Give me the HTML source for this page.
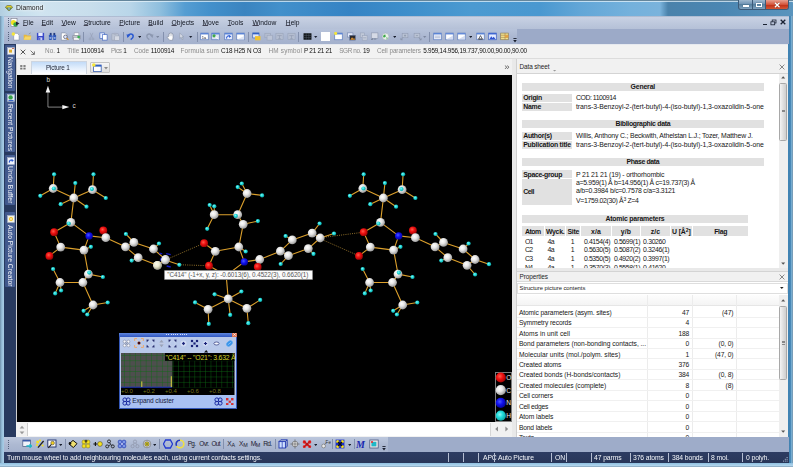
<!DOCTYPE html>
<html><head><meta charset="utf-8"><title>Diamond</title>
<style>
*{box-sizing:border-box;margin:0;padding:0}
html,body{width:793px;height:467px;overflow:hidden;background:#8fb4d4}
body{font-family:"Liberation Sans",sans-serif;font-size:7.2px;color:#111;position:relative;-webkit-font-smoothing:antialiased}
.a{position:absolute}
.t{position:absolute;white-space:nowrap;line-height:1}
.g{color:#8a8a8a}
u{text-decoration-thickness:0.5px;text-underline-offset:0.4px;text-decoration-color:#445}
#frame{left:0;top:0;width:793px;height:467px;background:#a9c6e2;border-radius:4px 4px 0 0}
#title{left:0;top:0;width:793px;height:15.5px;background:linear-gradient(90deg,#b2cee0 0,#c2dcea 12px,#d0e4f0 40px,#c8deec 90px,#b9d6e9 130px,#8fbfde 160px,#559dd2 185px,#4390cb 210px,#3a84c0 245px,#4290cb 280px,#3583c4 350px,#3c8dca 400px,#4b9ad1 470px,#4a98d0 540px,#62a6d7 580px,#74b1dc 630px,#7ab3dc 660px,#4a82ab 668px,#4a86b2 720px,#5a94bd 793px);border-radius:4px 4px 0 0}
#title:after{content:"";position:absolute;left:0;top:0;right:0;height:2px;background:linear-gradient(#64869c 0 50%,rgba(235,246,252,.7) 50% 100%)}
#root{position:absolute;left:0;top:0;width:793px;height:467px;overflow:hidden;filter:blur(.4px)}
</style></head><body><div id="root">
<div id="frame" class="a"></div>
<div id="title" class="a"></div>
<!-- title -->
<svg class="a" style="left:5.2px;top:4.6px" width="8" height="6.6" viewBox="0 0 10 8"><polygon points="0.4,2.6 2.6,0.6 7.4,0.6 9.6,2.6 5,7.6" fill="#e8d428" stroke="#4a4a28" stroke-width="0.7"/><polygon points="1.2,3 8.8,3 5,7.2" fill="#3a7a58" opacity=".85"/><polygon points="3.4,3 6.6,3 5,7.2" fill="#8fb0d0" opacity=".9"/></svg>
<div class="t" style="left:16px;top:4.6px;font-size:6.8px;color:#1a1a1a;text-shadow:0 0 3px #fff,0 0 4px #fff">Diamond</div>
<!-- caption buttons -->
<div class="a" style="left:738px;top:0;width:51px;height:9.5px;border:1px solid #3c5a78;border-top:0;border-radius:0 0 3px 3px;background:linear-gradient(#9fb9cf,#6f93b3 45%,#56809f 50%,#7fa3c0);overflow:hidden">
 <div class="a" style="left:13px;top:0;width:1px;height:10px;background:#3c5a78"></div>
 <div class="a" style="left:26px;top:0;width:1px;height:10px;background:#3c5a78"></div>
 <div class="a" style="left:27px;top:0;width:24px;height:10px;background:linear-gradient(#e8a090,#d4553c 45%,#c03018 50%,#d8603c)"></div>
 <div class="a" style="left:4px;top:5px;width:5.5px;height:2px;background:#fff;box-shadow:0 0 1px #234"></div>
 <div class="a" style="left:17px;top:2.5px;width:6px;height:4.5px;border:1.2px solid #fff;box-shadow:0 0 1px #234"></div>
 <svg class="a" style="left:35.4px;top:1.8px" width="6.4" height="6" viewBox="0 0 6.4 6"><path d="M.9.8 5.5 5.2M5.5.8.9 5.2" stroke="#5a1a10" stroke-width="2.2" opacity=".55"/><path d="M.9.8 5.5 5.2M5.5.8.9 5.2" stroke="#fff" stroke-width="1.4"/></svg>
</div>
<!-- menu bar -->
<div class="a" style="left:4px;top:15.5px;width:785px;height:14px;background:linear-gradient(#94a6c0 0,#c9d2e4 7%,#bec9dd 50%,#b3bfd6 100%)"></div>
<div class="a" style="left:7.6px;top:18px;width:1px;height:9px;background:repeating-linear-gradient(#55627c 0 1px,transparent 1px 2px)"></div>
<svg class="a" style="left:10px;top:17.5px" width="10" height="10" viewBox="0 0 10 10"><rect x="1" y=".5" width="6" height="8" fill="#fff" stroke="#667" stroke-width=".5"/><circle cx="3.5" cy="4.5" r="2.6" fill="#f0e020"/><circle cx="5.5" cy="6.5" r="2.2" fill="#38a848"/><polygon points="6,3.5 9.5,5.5 6,7.5" fill="#223"/></svg>
<div class="t" id="menu" style="left:0;top:19.8px;font-size:6.7px;color:#10151f">
<span class="a" style="left:23px"><u>F</u>ile</span><span class="a" style="left:41.6px"><u>E</u>dit</span><span class="a" style="left:61.5px"><u>V</u>iew</span><span class="a" style="left:83.7px"><u>S</u>tructure</span><span class="a" style="left:119.3px"><u>P</u>icture</span><span class="a" style="left:148.3px"><u>B</u>uild</span><span class="a" style="left:171.5px"><u>O</u>bjects</span><span class="a" style="left:202.5px"><u>M</u>ove</span><span class="a" style="left:227.7px"><u>T</u>ools</span><span class="a" style="left:252.5px"><u>W</u>indow</span><span class="a" style="left:285.8px"><u>H</u>elp</span>
</div>
<!-- mdi buttons -->
<div class="a" style="left:762.5px;top:24.2px;width:4px;height:1.2px;background:#1a2233"></div>
<svg class="a" style="left:770px;top:18.5px" width="7" height="7" viewBox="0 0 7 7"><rect x="2.2" y="1" width="3.8" height="3" fill="none" stroke="#1a2233" stroke-width=".8"/><rect x=".9" y="2.8" width="3.8" height="3" fill="#b8c3d9" stroke="#1a2233" stroke-width=".8"/></svg>
<svg class="a" style="left:779.5px;top:19px" width="6" height="6" viewBox="0 0 6 6"><path d="M.7.7 5.3 5.3M5.3.7.7 5.3" stroke="#1a2233" stroke-width="1.3"/></svg>
<!-- toolbar row -->
<div class="a" style="left:4px;top:29.3px;width:785px;height:14.4px;background:#9caac8"></div>
<div class="a" style="left:4px;top:29.3px;width:513px;height:14.4px;background:linear-gradient(#b7c3da,#abb7d1 50%,#a4b1cd)"></div>
<div class="a" style="left:7.6px;top:32px;width:1px;height:9px;background:repeating-linear-gradient(#55627c 0 1px,transparent 1px 2px)"></div>
<svg class="a" style="left:10.5px;top:32.0px" width="9.0" height="9.0" viewBox="0 0 10 10"><path d="M3 1.5h4l2 2v5.5h-6z" fill="#fff" stroke="#7a869c" stroke-width=".6"/><circle cx="2.6" cy="2.2" r="1.9" fill="#f6e63a"/></svg>
<svg class="a" style="left:23.2px;top:32.0px" width="9.0" height="9.0" viewBox="0 0 10 10"><path d="M.8 3h3l.8 1h4.2v4.6H.8z" fill="#e8b83c"/><path d="M.8 8.6 2.3 5h7.2L8.2 8.6z" fill="#f6d668"/><path d="M6.5 2.2l2-1.2" stroke="#777" stroke-width=".6"/></svg>
<svg class="a" style="left:35.5px;top:32.0px" width="9.0" height="9.0" viewBox="0 0 10 10"><rect x="1" y="1" width="8" height="8" fill="#3848c8"/><rect x="2.6" y="1" width="4.8" height="3.4" fill="#e8ecff"/><rect x="3" y="6" width="4" height="3" fill="#c8d0f0"/><rect x="3.6" y="6.6" width="1.2" height="2.4" fill="#3848c8"/></svg>
<svg class="a" style="left:47.5px;top:32.0px" width="9.0" height="9.0" viewBox="0 0 10 10"><rect x="1" y="3" width="3.4" height="5.8" rx="1" fill="#2f58b8"/><rect x="5.6" y="3" width="3.4" height="5.8" rx="1" fill="#2f58b8"/><rect x="2" y="1" width="2" height="2.4" fill="#203a80"/><rect x="6" y="1" width="2" height="2.4" fill="#203a80"/><rect x="4" y="4" width="2" height="2" fill="#5a7ad0"/><rect x="1.6" y="6" width="2.2" height="1.2" fill="#cfe0ff"/><rect x="6.2" y="6" width="2.2" height="1.2" fill="#cfe0ff"/></svg>
<svg class="a" style="left:59.8px;top:32.0px" width="9.0" height="9.0" viewBox="0 0 10 10"><path d="M1.5 1h4.5l1.5 1.5v6.5h-6z" fill="#fff" stroke="#7a869c" stroke-width=".6"/><circle cx="6" cy="5.4" r="2" fill="#dfe8ff" stroke="#445" stroke-width=".7"/><path d="M7.4 6.8 9.4 8.8" stroke="#d89020" stroke-width="1.2"/></svg>
<svg class="a" style="left:71.7px;top:32.0px" width="9.0" height="9.0" viewBox="0 0 10 10"><rect x="2.4" y="1" width="5.2" height="3" fill="#fff" stroke="#889" stroke-width=".5"/><path d="M.8 4h8.4v3.6H.8z" fill="#c9ccd4" stroke="#70757f" stroke-width=".5"/><rect x="2" y="6.4" width="6" height="2.6" fill="#f4f4f4" stroke="#889" stroke-width=".4"/><circle cx="7.4" cy="5.6" r="1.5" fill="#38b050"/></svg>
<div class="a" style="left:83.0px;top:31.5px;width:1px;height:10px;background:#8390ad"></div>
<svg class="a" style="left:86.8px;top:32.0px" width="9.0" height="9.0" viewBox="0 0 10 10"><path d="M3.5 1 6 6.5M6.5 1 4 6.5" stroke="#929cb2" stroke-width=".6"/><circle cx="3.3" cy="7.8" r="1.1" fill="none" stroke="#929cb2" stroke-width=".6"/><circle cx="6.7" cy="7.8" r="1.1" fill="none" stroke="#929cb2" stroke-width=".6"/></svg>
<svg class="a" style="left:98.9px;top:32.0px" width="9.0" height="9.0" viewBox="0 0 10 10"><rect x="1" y="1" width="5" height="6" fill="#eaf0ff" stroke="#3a62c0" stroke-width=".7"/><rect x="4" y="3" width="5" height="6" fill="#fff" stroke="#3a62c0" stroke-width=".7"/></svg>
<svg class="a" style="left:111.2px;top:32.0px" width="9.0" height="9.0" viewBox="0 0 10 10"><rect x="1" y="2" width="7" height="7" fill="#bcc4d4" stroke="#98a0b4" stroke-width=".6"/><rect x="3" y="1" width="3" height="2" fill="#a8b0c4"/><rect x="4.2" y="4.4" width="5" height="4.8" fill="#d4d9e4" stroke="#98a0b4" stroke-width=".5"/></svg>
<div class="a" style="left:122.5px;top:31.5px;width:1px;height:10px;background:#8390ad"></div>
<svg class="a" style="left:126.1px;top:32.0px" width="9.0" height="9.0" viewBox="0 0 10 10"><path d="M2.2 4.6C3 1.6 7.6 1.4 8 4.6 8.2 6.6 6.6 7.6 5.2 8.4" fill="none" stroke="#2858d0" stroke-width="1.7"/><polygon points="0.6,2.6 4.6,3.6 1.6,6.6" fill="#2858d0"/></svg>
<svg class="a" style="left:137.8px;top:36.2px" width="3.4" height="2.4" viewBox="0 0 4 3"><polygon points="0,0 4,0 2,2.6" fill="#1a2030"/></svg>
<svg class="a" style="left:145.1px;top:32.0px" width="9.0" height="9.0" viewBox="0 0 10 10"><path d="M7.8 4.6C7 1.6 2.4 1.4 2 4.6 1.8 6.6 3.4 7.6 4.8 8.4" fill="none" stroke="#8c98b0" stroke-width="1.5"/><polygon points="9.4,2.6 5.4,3.6 8.4,6.6" fill="#8c98b0"/></svg>
<svg class="a" style="left:155.9px;top:36.2px" width="3.4" height="2.4" viewBox="0 0 4 3"><polygon points="0,0 4,0 2,2.6" fill="#7c879f"/></svg>
<div class="a" style="left:162.5px;top:31.5px;width:1px;height:10px;background:#8390ad"></div>
<svg class="a" style="left:166.0px;top:32.0px" width="9.0" height="9.0" viewBox="0 0 10 10"><path d="M3 5.2V2.2q.6-.8 1.2 0V1.2q.6-.8 1.2 0v.4q.6-.8 1.2 0v.9q.6-.7 1.2 0V6.4L7.2 9.2H4L1.4 6q-.2-1 .8-.9z" fill="#fdfdfd" stroke="#6f788c" stroke-width=".55"/><path d="M4.2 2.2v2.4M5.4 1.8v2.8M6.6 2.4v2.2" stroke="#9aa2b4" stroke-width=".4"/></svg>
<svg class="a" style="left:177.1px;top:32.0px" width="9.0" height="9.0" viewBox="0 0 10 10"><path d="M3 1.2v6l1.6-1.4 1.2 2.6 1-.5-1.2-2.5h2z" fill="#d8dde8" stroke="#8a94a8" stroke-width=".6"/></svg>
<svg class="a" style="left:189.3px;top:36.2px" width="3.4" height="2.4" viewBox="0 0 4 3"><polygon points="0,0 4,0 2,2.6" fill="#1a2030"/></svg>
<div class="a" style="left:196.5px;top:31.5px;width:1px;height:10px;background:#8390ad"></div>
<svg class="a" style="left:200.0px;top:32.0px" width="9.0" height="9.0" viewBox="0 0 10 10"><rect x="0.8" y="1.2" width="8.4" height="7.4" fill="#fff" stroke="#5f7fc0" stroke-width=".8"/><rect x="0.8" y="1.2" width="8.4" height="1.5" fill="#5580d4"/><text x="2" y="7.6" font-size="4.6" font-family="Liberation Sans,sans-serif" fill="#223">1a</text></svg>
<svg class="a" style="left:211.4px;top:32.0px" width="9.0" height="9.0" viewBox="0 0 10 10"><rect x="0.8" y="1.2" width="8.4" height="7.4" fill="#dfe6f2" stroke="#5f7fc0" stroke-width=".8"/><rect x="0.8" y="1.2" width="8.4" height="1.5" fill="#5580d4"/><circle cx="3.4" cy="4.2" r="1.8" fill="#40a848"/><path d="M5 5.4 8.4 8" stroke="#fff" stroke-width="1"/></svg>
<svg class="a" style="left:223.7px;top:32.0px" width="9.0" height="9.0" viewBox="0 0 10 10"><rect x="0.8" y="1.2" width="8.4" height="7.4" fill="#e8eeff" stroke="#5f7fc0" stroke-width=".8"/><rect x="0.8" y="1.2" width="8.4" height="1.5" fill="#5580d4"/><path d="M3 7.4C2.4 4.6 5 3.6 6.6 4.8" fill="none" stroke="#2858d0" stroke-width="1.2"/><polygon points="5.4,3.4 8,4.6 6,6.6" fill="#2858d0"/></svg>
<svg class="a" style="left:235.8px;top:32.0px" width="9.0" height="9.0" viewBox="0 0 10 10"><rect x="0.8" y="1.2" width="8.4" height="7.4" fill="#fff" stroke="#5f7fc0" stroke-width=".8"/><rect x="0.8" y="1.2" width="8.4" height="1.5" fill="#5580d4"/><path d="M1.2 8.2 9 4.5V8.4z" fill="#dfe6f4"/></svg>
<div class="a" style="left:247.9px;top:31.5px;width:1px;height:10px;background:#8390ad"></div>
<svg class="a" style="left:251.7px;top:32.0px" width="9.0" height="9.0" viewBox="0 0 10 10"><rect x="0.8" y="1" width="7" height="5.6" fill="#dfe6f8" stroke="#3a5fb0" stroke-width=".7"/><rect x="0.8" y="1" width="7" height="1.6" fill="#2f5fc4"/><rect x="3.4" y="4.6" width="6" height="4.6" fill="#f2c22c"/></svg>
<svg class="a" style="left:263.5px;top:32.0px" width="9.0" height="9.0" viewBox="0 0 10 10"><rect x="1" y="1.4" width="6" height="5" fill="#b4bdd0" stroke="#97a2b8" stroke-width=".6"/><rect x="3.4" y="3.6" width="6" height="5.4" fill="#bcc4d6" stroke="#97a2b8" stroke-width=".6"/></svg>
<svg class="a" style="left:275.2px;top:32.0px" width="9.0" height="9.0" viewBox="0 0 10 10"><rect x="1" y="1.4" width="8" height="7" fill="#b4bdd0" stroke="#97a2b8" stroke-width=".6"/><path d="M2.5 4h5M5 4v3.5M3.5 7.5h3" stroke="#8f9ab0" stroke-width=".7"/></svg>
<svg class="a" style="left:286.8px;top:32.0px" width="9.0" height="9.0" viewBox="0 0 10 10"><rect x="1" y="1.4" width="8" height="7" fill="#b4bdd0" stroke="#97a2b8" stroke-width=".6"/><path d="M2.5 4h5M5 4v3.5M3.5 7.5h3" stroke="#8f9ab0" stroke-width=".7"/></svg>
<div class="a" style="left:297.9px;top:31.5px;width:1px;height:10px;background:#8390ad"></div>
<svg class="a" style="left:303.2px;top:32.0px" width="9.0" height="9.0" viewBox="0 0 10 10"><rect x=".6" y="1.4" width="8.8" height="7.2" fill="#101418"/><path d="M3.6 1.4v7.2M6.5 1.4v7.2M.6 3.8h8.8M.6 6.2h8.8" stroke="#5a6270" stroke-width=".5"/></svg>
<svg class="a" style="left:314.3px;top:36.2px" width="3.4" height="2.4" viewBox="0 0 4 3"><polygon points="0,0 4,0 2,2.6" fill="#1a2030"/></svg>
<svg class="a" style="left:321.3px;top:32.0px" width="9.0" height="9.0" viewBox="0 0 10 10"><rect x="0" y="0" width="10" height="10" fill="#fefefe"/></svg>
<svg class="a" style="left:333.5px;top:32.0px" width="9.0" height="9.0" viewBox="0 0 10 10"><rect x="0.8" y="1.2" width="8.4" height="7.4" fill="#fff" stroke="#5f7fc0" stroke-width=".8"/><rect x="0.8" y="1.2" width="8.4" height="1.5" fill="#5580d4"/><circle cx="1.8" cy="1.6" r="1.7" fill="#f6e63a"/></svg>
<svg class="a" style="left:346.5px;top:32.0px" width="9.0" height="9.0" viewBox="0 0 10 10"><rect x=".6" y="1" width="6" height="4.6" fill="#e4eafa" stroke="#6a7ea8" stroke-width=".6"/><rect x="3" y="3.6" width="6.4" height="5.4" fill="#2a2a30" stroke="#6a7ea8" stroke-width=".6"/><path d="M3.6 8.6 5.6 5.8 7 7.4 8 6.6 9 8.6z" fill="#d89030"/></svg>
<svg class="a" style="left:358.5px;top:32.0px" width="9.0" height="9.0" viewBox="0 0 10 10"><rect x="1.4" y="1" width="4.6" height="5" fill="#c0c8d8" stroke="#97a2b8" stroke-width=".6"/><rect x="3.6" y="4" width="5.4" height="5" fill="#c8cfde" stroke="#97a2b8" stroke-width=".6"/><path d="M4.6 6.5h3.4" stroke="#7f8aa0" stroke-width=".6"/></svg>
<svg class="a" style="left:369.5px;top:32.0px" width="9.0" height="9.0" viewBox="0 0 10 10"><rect x="1.4" y="1" width="7.4" height="6" fill="#d5dae6" stroke="#8792a8" stroke-width=".6"/><path d="M1 8.8 3 6.4v2.4z" fill="#707a90"/><rect x="4" y="7" width="3" height="1.6" fill="#8792a8"/></svg>
<svg class="a" style="left:381.1px;top:32.0px" width="9.0" height="9.0" viewBox="0 0 10 10"><circle cx="5" cy="5" r="3.8" fill="#e8f0e8" stroke="#9aa6b8" stroke-width=".6"/><path d="M2 4.4 4.6 2.4 5.4 5 3.2 6.4z" fill="#3aa848"/><path d="M5.6 5.6 8 6.6 6.4 8.4z" fill="#7fc488"/></svg>
<svg class="a" style="left:392.8px;top:36.2px" width="3.4" height="2.4" viewBox="0 0 4 3"><polygon points="0,0 4,0 2,2.6" fill="#1a2030"/></svg>
<svg class="a" style="left:400.0px;top:32.0px" width="9.0" height="9.0" viewBox="0 0 10 10"><rect x="2.4" y="1.4" width="6.4" height="5" fill="#b9c2d4" stroke="#8e99b0" stroke-width=".6"/><path d="M4.4 4h2.4M5.6 2.8v2.4" stroke="#7f8aa0" stroke-width=".6"/><path d="M1 8.6 3.4 6.2M1 8.6h2M1 8.6v-2" stroke="#7f8aa0" stroke-width=".7" fill="none"/></svg>
<svg class="a" style="left:412.5px;top:32.0px" width="9.0" height="9.0" viewBox="0 0 10 10"><rect x="1.2" y="1.4" width="6.4" height="5" fill="#b9c2d4" stroke="#8e99b0" stroke-width=".6"/><path d="M3.2 4h2.4" stroke="#7f8aa0" stroke-width=".6"/><path d="M6.4 6.4 9 8.8M9 8.8H7M9 8.8v-2" stroke="#7f8aa0" stroke-width=".7" fill="none"/></svg>
<svg class="a" style="left:423.3px;top:36.2px" width="3.4" height="2.4" viewBox="0 0 4 3"><polygon points="0,0 4,0 2,2.6" fill="#7c879f"/></svg>
<div class="a" style="left:429.3px;top:31.5px;width:1px;height:10px;background:#8390ad"></div>
<svg class="a" style="left:433.1px;top:32.0px" width="9.0" height="9.0" viewBox="0 0 10 10"><rect x="0.8" y="1.2" width="8.4" height="7.4" fill="#f4f7ff" stroke="#5f7fc0" stroke-width=".8"/><rect x="0.8" y="1.2" width="8.4" height="1.5" fill="#5580d4"/><path d="M2 4.6h6M2 6.4h6" stroke="#8c9cc0" stroke-width=".7"/></svg>
<svg class="a" style="left:444.9px;top:32.0px" width="9.0" height="9.0" viewBox="0 0 10 10"><rect x="0.8" y="1.2" width="8.4" height="7.4" fill="#fff" stroke="#5f7fc0" stroke-width=".8"/><rect x="0.8" y="1.2" width="8.4" height="1.5" fill="#5f86d8"/><path d="M1.2 8.2 9 4V8.4z" fill="#d4dcf0"/></svg>
<svg class="a" style="left:456.8px;top:32.0px" width="9.0" height="9.0" viewBox="0 0 10 10"><rect x="0.8" y="1.2" width="8.4" height="7.4" fill="#fff" stroke="#5f7fc0" stroke-width=".8"/><rect x="0.8" y="1.2" width="8.4" height="1.5" fill="#5f86d8"/><path d="M1.2 8.2 9 4V8.4z" fill="#d4dcf0"/></svg>
<svg class="a" style="left:468.9px;top:36.2px" width="3.4" height="2.4" viewBox="0 0 4 3"><polygon points="0,0 4,0 2,2.6" fill="#1a2030"/></svg>
<svg class="a" style="left:475.5px;top:32.0px" width="9.0" height="9.0" viewBox="0 0 10 10"><rect x="0.8" y="1.2" width="8.4" height="7.4" fill="#f4f7ff" stroke="#5f7fc0" stroke-width=".8"/><rect x="0.8" y="1.2" width="8.4" height="1.5" fill="#5580d4"/><path d="M3 7.8 5 4l2 3.8z" fill="none" stroke="#222" stroke-width=".7"/><path d="M2 8h6" stroke="#222" stroke-width=".5"/></svg>
<svg class="a" style="left:487.5px;top:32.0px" width="9.0" height="9.0" viewBox="0 0 10 10"><rect x=".8" y="1.2" width="8.4" height="7.4" fill="#e4ebff" stroke="#3a5fc0" stroke-width=".8"/><rect x=".8" y="1.2" width="8.4" height="1.5" fill="#3a62d0"/><path d="M1.6 8 3.6 4.6 5 6.6 6.4 5.2 8.4 8z" fill="#2c50d0"/></svg>
<svg class="a" style="left:499.9px;top:32.0px" width="9.0" height="9.0" viewBox="0 0 10 10"><rect x=".8" y="1.2" width="8.4" height="7.4" fill="#f0e090" stroke="#8a7a50" stroke-width=".7"/><path d="M.8 3.6h8.4M5.6 1.2v7.4M.8 6h8.4" stroke="#a0783c" stroke-width=".6"/><rect x="5.6" y="3.6" width="3.6" height="2.4" fill="#e8a040"/></svg>
<svg class="a" style="left:512.8px;top:38px" width="4" height="5" viewBox="0 0 4 5"><rect x=".4" y="0" width="3.2" height=".9" fill="#1a2030"/><polygon points="0.2,2 3.8,2 2,4.4" fill="#1a2030"/></svg>
<!-- info bar -->
<div class="a" style="left:4px;top:43.7px;width:785px;height:15.6px;background:#f2f2f2;border-top:1px solid #e6e9ef;border-bottom:1px solid #dcdcdc"></div>
<svg class="a" style="left:20px;top:48.5px" width="6" height="6" viewBox="0 0 6 6"><path d="M.7.7 5.3 5.3M5.3.7.7 5.3" stroke="#444" stroke-width=".9"/></svg>
<svg class="a" style="left:30px;top:49.5px" width="5" height="5" viewBox="0 0 5 5"><path d="M.6.6 4.2 4.2M4.4 1.4v3H1.4" stroke="#555" stroke-width=".8" fill="none"/></svg>
<div class="t" id="info" style="left:0;top:47.7px;font-size:6.4px;letter-spacing:-0.02px">
<span class="a g" style="letter-spacing:0.016px;left:45px">No.</span><span class="a" style="left:56.5px">1</span>
<span class="a g" style="letter-spacing:0.050px;left:67.3px">Title</span><span class="a" style="letter-spacing:-0.158px;left:80.7px">1100914</span>
<span class="a g" style="letter-spacing:-0.370px;left:111px">Pics</span><span class="a" style="left:123.3px">1</span>
<span class="a g" style="letter-spacing:-0.046px;left:134px">Code</span><span class="a" style="letter-spacing:-0.158px;left:150.8px">1100914</span>
<span class="a g" style="letter-spacing:0.091px;left:180.6px">Formula sum</span><span class="a" style="letter-spacing:-0.136px;left:221px">C18 H25 N O3</span>
<span class="a g" style="letter-spacing:0.160px;left:268.6px">HM symbol</span><span class="a" style="letter-spacing:-0.281px;left:304px">P 21 21 21</span>
<span class="a g" style="letter-spacing:-0.388px;left:339.2px">SGR no.</span><span class="a" style="letter-spacing:-0.309px;left:363px">19</span>
<span class="a g" style="letter-spacing:-0.074px;left:377px">Cell parameters</span><span class="a" style="letter-spacing:-0.223px;left:423.2px">5.959,14.956,19.737,90.00,90.00,90.00</span>
</div>
<!-- tab row (left, over canvas) -->
<div class="a" style="left:16px;top:59.3px;width:496.5px;height:16.2px;background:#f1f1f1"></div>
<svg class="a" style="left:20.2px;top:65.4px" width="6" height="4.6" viewBox="0 0 6 4.6"><g fill="#777"><rect x=".2" y=".1" width="2.2" height="1.8"/><rect x="3.4" y=".1" width="2.2" height="1.8"/><rect x=".2" y="2.7" width="2.2" height="1.8"/><rect x="3.4" y="2.7" width="2.2" height="1.8"/></g></svg>
<div class="a" style="left:30.5px;top:60.8px;width:56px;height:13.7px;background:linear-gradient(#c2dbf8,#e2eefc 50%,#fdfeff);border:1px solid #cdd5e0;border-bottom:0"></div>
<div class="t" style="left:46px;top:65.4px;font-size:6.4px;color:#1b2233;letter-spacing:-0.18px">Picture 1</div>
<div class="a" style="left:89.5px;top:61.5px;width:20.5px;height:11.5px;background:linear-gradient(#f6f6f6,#dedede);border:1px solid #c4c4c4;border-radius:1px"></div>
<svg class="a" style="left:91.5px;top:62.5px" width="10" height="10" viewBox="0 0 10 10"><rect x="1.6" y="2" width="7.6" height="6.6" fill="#fff" stroke="#3a5fb0" stroke-width=".8"/><rect x="1.6" y="2" width="7.6" height="1.6" fill="#2f5fc4"/><circle cx="1.8" cy="2" r="1.8" fill="#f6e63a"/></svg>
<svg class="a" style="left:104px;top:66.6px" width="4" height="3" viewBox="0 0 4 3"><polygon points="0,0 4,0 2,2.4" fill="#8a8a8a"/></svg>
<div class="t" style="left:504.2px;top:62px;font-size:9.5px;color:#555;letter-spacing:-1px">&#187;</div>
<!-- sidebar -->
<div class="a" style="left:4px;top:43.7px;width:12.1px;height:393.4px;background:#283a5f"></div><div class="a" style="left:16.1px;top:59.3px;width:1.4px;height:377.8px;background:#cfcfcf"></div>
<div class="a stab" style="top:44.5px;height:46.5px"></div>
<div class="a stab" style="top:92.5px;height:59.8px"></div>
<div class="a stab" style="top:154.5px;height:50.9px"></div>
<div class="a stab" style="top:211.7px;height:75.8px"></div>
<style>.stab{left:5px;width:10.2px;background:linear-gradient(90deg,#3f568a,#4a6398);border-radius:1px}
.vt{position:absolute;left:7px;width:7px;writing-mode:vertical-rl;white-space:nowrap;font-size:6.7px;line-height:7px;color:#f4f6fb}</style>
<svg class="a" style="left:6.6px;top:46.5px" width="8" height="8" viewBox="0 0 8 8"><rect x=".6" y=".6" width="6.8" height="6.8" fill="#f2f2f2" stroke="#b8c0d0" stroke-width=".5"/><rect x="2" y="2.6" width="3" height="3" fill="#e0b030"/><path d="M5 1.5h2" stroke="#c05030" stroke-width=".8"/></svg>
<div class="vt" style="letter-spacing:-0.011px;top:56.5px">Navigation</div>
<svg class="a" style="left:6.6px;top:94.3px" width="8" height="8" viewBox="0 0 8 8"><rect x=".6" y=".6" width="6.8" height="6.8" fill="#dfe8f4" stroke="#b8c0d0" stroke-width=".5"/><circle cx="3.6" cy="3.4" r="2.2" fill="#38a048"/><path d="M1.5 6.6h5" stroke="#2858c0" stroke-width="1"/></svg>
<div class="vt" style="letter-spacing:-0.008px;top:104.3px">Recent Pictures</div>
<svg class="a" style="left:6.6px;top:156.8px" width="8" height="8" viewBox="0 0 8 8"><rect x=".6" y=".6" width="6.8" height="6.8" fill="#eef2fb" stroke="#b8c0d0" stroke-width=".5"/><path d="M2.4 5.6C2 3.4 4 2.4 5.6 3.6" fill="none" stroke="#2858d0" stroke-width="1.2"/><polygon points="4.6,2 6.8,3.6 4.8,5" fill="#2858d0"/></svg>
<div class="vt" style="letter-spacing:0.184px;top:166px">Undo Buffer</div>
<svg class="a" style="left:6.6px;top:214.5px" width="8" height="8" viewBox="0 0 8 8"><rect x=".6" y=".6" width="6.8" height="6.8" fill="#f4f4e6" stroke="#b8c0d0" stroke-width=".5"/><circle cx="4" cy="4" r="2" fill="#f0c020"/><circle cx="4" cy="4" r=".9" fill="#fff8d0"/></svg>
<div class="vt" style="letter-spacing:0.045px;top:224.6px">Auto Picture Creator</div>
<svg class="a" style="left:17.3px;top:74.5px" width="495" height="347.5" viewBox="17.3 74.5 495 347.5"><rect x="0" y="0" width="600" height="500" fill="#000"/><defs>
<radialGradient id="gC" cx=".38" cy=".35" r=".75"><stop offset="0" stop-color="#ffffff"/><stop offset=".4" stop-color="#e6e6e6"/><stop offset=".8" stop-color="#a8a8a8"/><stop offset="1" stop-color="#6a6a6a"/></radialGradient>
<radialGradient id="gY" cx=".38" cy=".35" r=".75"><stop offset="0" stop-color="#fffff0"/><stop offset=".45" stop-color="#ecead0"/><stop offset="1" stop-color="#84826c"/></radialGradient>
<radialGradient id="gH" cx=".4" cy=".38" r=".75"><stop offset="0" stop-color="#8ff6f6"/><stop offset=".4" stop-color="#20dcdc"/><stop offset="1" stop-color="#0c8c8c"/></radialGradient>
<radialGradient id="gO" cx=".4" cy=".38" r=".75"><stop offset="0" stop-color="#ff5a4a"/><stop offset=".4" stop-color="#ee1010"/><stop offset="1" stop-color="#7c0000"/></radialGradient>
<radialGradient id="gN" cx=".4" cy=".38" r=".75"><stop offset="0" stop-color="#4a5aff"/><stop offset=".4" stop-color="#1010ee"/><stop offset="1" stop-color="#00007c"/></radialGradient>
</defs><g stroke="#d8d8d8" stroke-width=".6" fill="#f4f4f4"><path d="M48.25 90v16.6h16" fill="none"/><polygon points="48.25,85.3 45.95,91.9 50.55,91.9" stroke="none"/><polygon points="69.6,106.6 62.6,104.55 62.6,108.65" stroke="none"/></g><text x="46.9" y="81.9" font-size="6.4" fill="#dcdcdc" font-family="Liberation Sans,sans-serif">b</text><text x="72.7" y="107.3" font-size="6.4" fill="#dcdcdc" font-family="Liberation Sans,sans-serif">c</text><g stroke="#c89a3a" stroke-width=".8" stroke-dasharray=".9 1.3"><line x1="168" y1="258.5" x2="204.3" y2="242.7"/><line x1="181" y1="264.3" x2="209.3" y2="265.2"/><line x1="324" y1="236.8" x2="364" y2="231.7"/><line x1="324" y1="239.8" x2="359.3" y2="255.4"/></g><g stroke="#dca02c" stroke-width="1.1" stroke-linecap="round"><line x1="53.5" y1="188.0" x2="54.4" y2="173.8"/><line x1="53.5" y1="188.0" x2="40.6" y2="195.3"/><line x1="53.5" y1="188.0" x2="74.1" y2="197.5"/><line x1="92.8" y1="189.2" x2="93.8" y2="173.8"/><line x1="92.8" y1="189.2" x2="106.1" y2="197.5"/><line x1="92.8" y1="189.2" x2="74.1" y2="197.5"/><line x1="74.1" y1="197.5" x2="75.6" y2="182.6"/><line x1="74.1" y1="197.5" x2="61.0" y2="203.7"/><line x1="74.1" y1="197.5" x2="86.8" y2="206.2"/><line x1="74.1" y1="197.5" x2="71.2" y2="221.9"/><line x1="71.2" y1="221.9" x2="54.4" y2="231.7"/><line x1="71.2" y1="221.9" x2="89.4" y2="235.4"/><line x1="54.4" y1="231.7" x2="61.0" y2="246.6"/><line x1="61.0" y1="246.6" x2="49.7" y2="255.4"/><line x1="61.0" y1="246.6" x2="84.3" y2="249.6"/><line x1="84.3" y1="249.6" x2="89.4" y2="235.4"/><line x1="84.3" y1="249.6" x2="91.2" y2="246.3"/><line x1="89.4" y1="235.4" x2="106.1" y2="237.2"/><line x1="106.1" y1="237.2" x2="103.6" y2="229.9"/><line x1="106.1" y1="237.2" x2="125.8" y2="246.3"/><line x1="125.8" y1="246.3" x2="134.2" y2="241.9"/><line x1="125.8" y1="246.3" x2="138.5" y2="257.2"/><line x1="134.2" y1="241.9" x2="126.2" y2="233.5"/><line x1="134.2" y1="241.9" x2="153.8" y2="248.5"/><line x1="138.5" y1="257.2" x2="132.0" y2="260.1"/><line x1="138.5" y1="257.2" x2="157.8" y2="264.8"/><line x1="153.8" y1="248.5" x2="159.3" y2="243.0"/><line x1="153.8" y1="248.5" x2="165.8" y2="259.0"/><line x1="165.8" y1="259.0" x2="157.8" y2="264.8"/><line x1="84.3" y1="249.6" x2="88.7" y2="273.6"/><line x1="88.7" y1="273.6" x2="103.2" y2="276.5"/><line x1="88.7" y1="273.6" x2="83.2" y2="282.0"/><line x1="83.2" y1="282.0" x2="60.3" y2="282.0"/><line x1="60.3" y1="282.0" x2="53.4" y2="268.5"/><line x1="60.3" y1="282.0" x2="55.5" y2="292.9"/><line x1="60.3" y1="282.0" x2="61.4" y2="290.0"/><line x1="83.2" y1="282.0" x2="93.4" y2="304.5"/><line x1="93.4" y1="304.5" x2="108.0" y2="302.0"/><line x1="93.4" y1="304.5" x2="83.9" y2="310.3"/><line x1="93.4" y1="304.5" x2="87.6" y2="314.0"/><line x1="88.7" y1="273.6" x2="83.2" y2="282.0"/></g><circle cx="53.5" cy="188.0" r="4.4" fill="url(#gC)"/><circle cx="92.8" cy="189.2" r="4.4" fill="url(#gC)"/><circle cx="74.1" cy="197.5" r="4.4" fill="url(#gC)"/><circle cx="71.2" cy="221.9" r="4.4" fill="url(#gC)"/><circle cx="54.4" cy="231.7" r="3.9" fill="url(#gO)"/><circle cx="89.4" cy="235.4" r="3.7" fill="url(#gN)"/><circle cx="103.6" cy="229.9" r="3.9" fill="url(#gO)"/><circle cx="106.1" cy="237.2" r="4.4" fill="url(#gC)"/><circle cx="61.0" cy="246.6" r="4.4" fill="url(#gC)"/><circle cx="84.3" cy="249.6" r="4.4" fill="url(#gC)"/><circle cx="49.7" cy="255.4" r="3.9" fill="url(#gO)"/><circle cx="125.8" cy="246.3" r="4.4" fill="url(#gC)"/><circle cx="134.2" cy="241.9" r="4.4" fill="url(#gC)"/><circle cx="138.5" cy="257.2" r="4.4" fill="url(#gC)"/><circle cx="153.8" cy="248.5" r="4.4" fill="url(#gC)"/><circle cx="165.8" cy="259.0" r="4.4" fill="url(#gC)"/><circle cx="157.8" cy="264.8" r="4.4" fill="url(#gC)"/><circle cx="88.7" cy="273.6" r="4.4" fill="url(#gC)"/><circle cx="60.3" cy="282.0" r="4.4" fill="url(#gC)"/><circle cx="83.2" cy="282.0" r="4.4" fill="url(#gC)"/><circle cx="93.4" cy="304.5" r="4.4" fill="url(#gC)"/><circle cx="54.4" cy="173.8" r="2.1" fill="url(#gH)"/><circle cx="93.8" cy="173.8" r="2.1" fill="url(#gH)"/><circle cx="40.6" cy="195.3" r="2.1" fill="url(#gH)"/><circle cx="75.6" cy="182.6" r="2.1" fill="url(#gH)"/><circle cx="106.1" cy="197.5" r="2.1" fill="url(#gH)"/><circle cx="61.0" cy="203.7" r="2.1" fill="url(#gH)"/><circle cx="86.8" cy="206.2" r="2.1" fill="url(#gH)"/><circle cx="91.2" cy="246.3" r="2.1" fill="url(#gH)"/><circle cx="126.2" cy="233.5" r="2.1" fill="url(#gH)"/><circle cx="132.0" cy="260.1" r="2.1" fill="url(#gH)"/><circle cx="159.3" cy="243.0" r="2.1" fill="url(#gH)"/><circle cx="53.4" cy="268.5" r="2.1" fill="url(#gH)"/><circle cx="103.2" cy="276.5" r="2.1" fill="url(#gH)"/><circle cx="55.5" cy="292.9" r="2.1" fill="url(#gH)"/><circle cx="61.4" cy="290.0" r="2.1" fill="url(#gH)"/><circle cx="108.0" cy="302.0" r="2.1" fill="url(#gH)"/><circle cx="83.9" cy="310.3" r="2.1" fill="url(#gH)"/><circle cx="87.6" cy="314.0" r="2.1" fill="url(#gH)"/><circle cx="54.1" cy="188.0" r="2.1" fill="url(#gH)"/><circle cx="69.1" cy="223.0" r="2.1" fill="url(#gH)"/><circle cx="92.2" cy="188.6" r="2.1" fill="url(#gH)"/><circle cx="89.6" cy="272.1" r="2.1" fill="url(#gH)"/><g stroke="#1418c8" stroke-width="1.3" fill="none"><path d="M159.5 252.6l3 .8M166.5 253.2l4.5 1M162 257l-1.5 3M167 265.5l4 1"/></g><line x1="165.6" y1="259.6" x2="179.6" y2="264.3" stroke="#dca02c" stroke-width="1.1"/><circle cx="165.6" cy="259.6" r="4.3" fill="url(#gC)"/><circle cx="157.8" cy="264.8" r="4.3" fill="url(#gY)"/><circle cx="179.6" cy="264.3" r="2.1" fill="url(#gH)"/><g stroke="#dca02c" stroke-width="1.1" stroke-linecap="round"><line x1="247.4" y1="193.0" x2="238.0" y2="186.6"/><line x1="247.4" y1="193.0" x2="242.1" y2="183.0"/><line x1="247.4" y1="193.0" x2="262.4" y2="194.9"/><line x1="247.4" y1="193.0" x2="238.0" y2="214.2"/><line x1="214.5" y1="214.2" x2="214.6" y2="205.8"/><line x1="214.5" y1="214.2" x2="210.0" y2="204.5"/><line x1="214.5" y1="214.2" x2="207.5" y2="228.3"/><line x1="214.5" y1="214.2" x2="238.0" y2="214.2"/><line x1="238.0" y1="214.2" x2="243.5" y2="223.8"/><line x1="243.5" y1="223.8" x2="258.2" y2="220.6"/><line x1="243.5" y1="223.8" x2="239.1" y2="246.5"/><line x1="239.1" y1="246.5" x2="215.6" y2="250.8"/><line x1="239.1" y1="246.5" x2="246.0" y2="251.0"/><line x1="239.1" y1="246.5" x2="244.6" y2="261.4"/><line x1="215.6" y1="250.8" x2="204.4" y2="242.7"/><line x1="215.6" y1="250.8" x2="209.3" y2="265.2"/><line x1="244.6" y1="261.4" x2="260.0" y2="259.0"/><line x1="260.0" y1="259.0" x2="258.0" y2="266.4"/><line x1="260.0" y1="259.0" x2="280.7" y2="250.7"/><line x1="280.7" y1="250.7" x2="288.7" y2="255.2"/><line x1="280.7" y1="250.7" x2="292.6" y2="239.4"/><line x1="288.7" y1="255.2" x2="281.0" y2="263.5"/><line x1="288.7" y1="255.2" x2="308.6" y2="248.1"/><line x1="292.6" y1="239.4" x2="285.9" y2="235.5"/><line x1="292.6" y1="239.4" x2="312.5" y2="232.6"/><line x1="308.6" y1="248.1" x2="313.8" y2="253.3"/><line x1="308.6" y1="248.1" x2="320.5" y2="237.5"/><line x1="312.5" y1="232.6" x2="319.9" y2="223.0"/><line x1="312.5" y1="232.6" x2="320.5" y2="237.5"/><line x1="320.5" y1="237.5" x2="334.3" y2="233.0"/><line x1="209.3" y1="265.2" x2="226.5" y2="275.0"/><line x1="244.6" y1="261.4" x2="226.5" y2="275.0"/><line x1="226.5" y1="275.0" x2="228.5" y2="298.4"/><line x1="228.5" y1="298.4" x2="214.9" y2="293.8"/><line x1="228.5" y1="298.4" x2="241.7" y2="291.0"/><line x1="228.5" y1="298.4" x2="208.4" y2="308.8"/><line x1="228.5" y1="298.4" x2="247.2" y2="307.8"/><line x1="208.4" y1="308.8" x2="195.4" y2="301.9"/><line x1="208.4" y1="308.8" x2="209.1" y2="323.4"/><line x1="247.2" y1="307.8" x2="260.5" y2="299.4"/><line x1="247.2" y1="307.8" x2="248.6" y2="322.7"/><line x1="228.5" y1="298.4" x2="230.5" y2="314.4"/></g><circle cx="247.4" cy="193.0" r="4.4" fill="url(#gC)"/><circle cx="214.5" cy="214.2" r="4.4" fill="url(#gC)"/><circle cx="238.0" cy="214.2" r="4.4" fill="url(#gC)"/><circle cx="243.5" cy="223.8" r="4.4" fill="url(#gC)"/><circle cx="204.4" cy="242.7" r="3.9" fill="url(#gO)"/><circle cx="239.1" cy="246.5" r="4.4" fill="url(#gC)"/><circle cx="215.6" cy="250.8" r="4.4" fill="url(#gC)"/><circle cx="244.6" cy="261.4" r="3.7" fill="url(#gN)"/><circle cx="209.3" cy="265.2" r="3.9" fill="url(#gO)"/><circle cx="260.0" cy="259.0" r="4.4" fill="url(#gC)"/><circle cx="258.0" cy="266.4" r="3.9" fill="url(#gO)"/><circle cx="280.7" cy="250.7" r="4.4" fill="url(#gC)"/><circle cx="288.7" cy="255.2" r="4.4" fill="url(#gC)"/><circle cx="292.6" cy="239.4" r="4.4" fill="url(#gC)"/><circle cx="308.6" cy="248.1" r="4.4" fill="url(#gC)"/><circle cx="312.5" cy="232.6" r="4.4" fill="url(#gC)"/><circle cx="320.5" cy="237.5" r="4.4" fill="url(#gC)"/><circle cx="226.5" cy="275.0" r="4.4" fill="url(#gC)"/><circle cx="228.5" cy="298.4" r="4.4" fill="url(#gC)"/><circle cx="208.4" cy="308.8" r="4.4" fill="url(#gC)"/><circle cx="247.2" cy="307.8" r="4.4" fill="url(#gC)"/><circle cx="238.0" cy="186.6" r="2.1" fill="url(#gH)"/><circle cx="242.1" cy="183.0" r="2.1" fill="url(#gH)"/><circle cx="262.4" cy="194.9" r="2.1" fill="url(#gH)"/><circle cx="214.6" cy="205.8" r="2.1" fill="url(#gH)"/><circle cx="210.0" cy="204.5" r="2.1" fill="url(#gH)"/><circle cx="258.2" cy="220.6" r="2.1" fill="url(#gH)"/><circle cx="207.5" cy="228.3" r="2.1" fill="url(#gH)"/><circle cx="246.0" cy="251.0" r="2.1" fill="url(#gH)"/><circle cx="281.0" cy="263.5" r="2.1" fill="url(#gH)"/><circle cx="285.9" cy="235.5" r="2.1" fill="url(#gH)"/><circle cx="313.8" cy="253.3" r="2.1" fill="url(#gH)"/><circle cx="319.9" cy="223.0" r="2.1" fill="url(#gH)"/><circle cx="334.3" cy="233.0" r="2.1" fill="url(#gH)"/><circle cx="214.9" cy="293.8" r="2.1" fill="url(#gH)"/><circle cx="241.7" cy="291.0" r="2.1" fill="url(#gH)"/><circle cx="195.4" cy="301.9" r="2.1" fill="url(#gH)"/><circle cx="260.5" cy="299.4" r="2.1" fill="url(#gH)"/><circle cx="230.5" cy="314.4" r="2.1" fill="url(#gH)"/><circle cx="209.1" cy="323.4" r="2.1" fill="url(#gH)"/><circle cx="248.6" cy="322.7" r="2.1" fill="url(#gH)"/><circle cx="236.1" cy="215.4" r="2.1" fill="url(#gH)"/><g stroke="#dca02c" stroke-width="1.1" stroke-linecap="round"><line x1="363.1" y1="188.0" x2="364.0" y2="173.8"/><line x1="363.1" y1="188.0" x2="350.2" y2="195.3"/><line x1="363.1" y1="188.0" x2="383.7" y2="197.5"/><line x1="402.4" y1="189.2" x2="403.4" y2="173.8"/><line x1="402.4" y1="189.2" x2="415.7" y2="197.5"/><line x1="402.4" y1="189.2" x2="383.7" y2="197.5"/><line x1="383.7" y1="197.5" x2="385.2" y2="182.6"/><line x1="383.7" y1="197.5" x2="370.6" y2="203.7"/><line x1="383.7" y1="197.5" x2="396.4" y2="206.2"/><line x1="383.7" y1="197.5" x2="380.8" y2="221.9"/><line x1="380.8" y1="221.9" x2="364.0" y2="231.7"/><line x1="380.8" y1="221.9" x2="399.0" y2="235.4"/><line x1="364.0" y1="231.7" x2="370.6" y2="246.6"/><line x1="370.6" y1="246.6" x2="359.3" y2="255.4"/><line x1="370.6" y1="246.6" x2="393.9" y2="249.6"/><line x1="393.9" y1="249.6" x2="399.0" y2="235.4"/><line x1="393.9" y1="249.6" x2="400.8" y2="246.3"/><line x1="399.0" y1="235.4" x2="415.7" y2="237.2"/><line x1="415.7" y1="237.2" x2="413.2" y2="229.9"/><line x1="415.7" y1="237.2" x2="435.4" y2="246.3"/><line x1="435.4" y1="246.3" x2="443.8" y2="241.9"/><line x1="435.4" y1="246.3" x2="448.1" y2="257.2"/><line x1="443.8" y1="241.9" x2="435.8" y2="233.5"/><line x1="443.8" y1="241.9" x2="463.4" y2="248.5"/><line x1="448.1" y1="257.2" x2="441.6" y2="260.1"/><line x1="448.1" y1="257.2" x2="467.4" y2="264.8"/><line x1="463.4" y1="248.5" x2="468.9" y2="243.0"/><line x1="463.4" y1="248.5" x2="475.4" y2="259.0"/><line x1="475.4" y1="259.0" x2="467.4" y2="264.8"/><line x1="475.4" y1="259.0" x2="489.3" y2="263.7"/><line x1="467.4" y1="264.8" x2="475.4" y2="274.0"/><line x1="393.9" y1="249.6" x2="398.3" y2="273.6"/><line x1="398.3" y1="273.6" x2="412.8" y2="276.5"/><line x1="398.3" y1="273.6" x2="392.8" y2="282.0"/><line x1="392.8" y1="282.0" x2="369.9" y2="282.0"/><line x1="369.9" y1="282.0" x2="363.0" y2="268.5"/><line x1="369.9" y1="282.0" x2="365.1" y2="292.9"/><line x1="369.9" y1="282.0" x2="371.0" y2="290.0"/><line x1="392.8" y1="282.0" x2="403.0" y2="304.5"/><line x1="403.0" y1="304.5" x2="417.6" y2="302.0"/><line x1="403.0" y1="304.5" x2="393.5" y2="310.3"/><line x1="403.0" y1="304.5" x2="397.2" y2="314.0"/><line x1="398.3" y1="273.6" x2="392.8" y2="282.0"/></g><circle cx="363.1" cy="188.0" r="4.4" fill="url(#gC)"/><circle cx="402.4" cy="189.2" r="4.4" fill="url(#gC)"/><circle cx="383.7" cy="197.5" r="4.4" fill="url(#gC)"/><circle cx="380.8" cy="221.9" r="4.4" fill="url(#gC)"/><circle cx="364.0" cy="231.7" r="3.9" fill="url(#gO)"/><circle cx="399.0" cy="235.4" r="3.7" fill="url(#gN)"/><circle cx="413.2" cy="229.9" r="3.9" fill="url(#gO)"/><circle cx="415.7" cy="237.2" r="4.4" fill="url(#gC)"/><circle cx="370.6" cy="246.6" r="4.4" fill="url(#gC)"/><circle cx="393.9" cy="249.6" r="4.4" fill="url(#gC)"/><circle cx="359.3" cy="255.4" r="3.9" fill="url(#gO)"/><circle cx="435.4" cy="246.3" r="4.4" fill="url(#gC)"/><circle cx="443.8" cy="241.9" r="4.4" fill="url(#gC)"/><circle cx="448.1" cy="257.2" r="4.4" fill="url(#gC)"/><circle cx="463.4" cy="248.5" r="4.4" fill="url(#gC)"/><circle cx="475.4" cy="259.0" r="4.4" fill="url(#gC)"/><circle cx="467.4" cy="264.8" r="4.4" fill="url(#gC)"/><circle cx="398.3" cy="273.6" r="4.4" fill="url(#gC)"/><circle cx="369.9" cy="282.0" r="4.4" fill="url(#gC)"/><circle cx="392.8" cy="282.0" r="4.4" fill="url(#gC)"/><circle cx="403.0" cy="304.5" r="4.4" fill="url(#gC)"/><circle cx="364.0" cy="173.8" r="2.1" fill="url(#gH)"/><circle cx="403.4" cy="173.8" r="2.1" fill="url(#gH)"/><circle cx="350.2" cy="195.3" r="2.1" fill="url(#gH)"/><circle cx="385.2" cy="182.6" r="2.1" fill="url(#gH)"/><circle cx="415.7" cy="197.5" r="2.1" fill="url(#gH)"/><circle cx="370.6" cy="203.7" r="2.1" fill="url(#gH)"/><circle cx="396.4" cy="206.2" r="2.1" fill="url(#gH)"/><circle cx="400.8" cy="246.3" r="2.1" fill="url(#gH)"/><circle cx="435.8" cy="233.5" r="2.1" fill="url(#gH)"/><circle cx="441.6" cy="260.1" r="2.1" fill="url(#gH)"/><circle cx="468.9" cy="243.0" r="2.1" fill="url(#gH)"/><circle cx="489.3" cy="263.7" r="2.1" fill="url(#gH)"/><circle cx="475.4" cy="274.0" r="2.1" fill="url(#gH)"/><circle cx="363.0" cy="268.5" r="2.1" fill="url(#gH)"/><circle cx="412.8" cy="276.5" r="2.1" fill="url(#gH)"/><circle cx="365.1" cy="292.9" r="2.1" fill="url(#gH)"/><circle cx="371.0" cy="290.0" r="2.1" fill="url(#gH)"/><circle cx="417.6" cy="302.0" r="2.1" fill="url(#gH)"/><circle cx="393.5" cy="310.3" r="2.1" fill="url(#gH)"/><circle cx="397.2" cy="314.0" r="2.1" fill="url(#gH)"/><circle cx="363.7" cy="188.0" r="2.1" fill="url(#gH)"/><circle cx="378.7" cy="223.0" r="2.1" fill="url(#gH)"/><circle cx="401.8" cy="188.6" r="2.1" fill="url(#gH)"/><circle cx="399.2" cy="272.1" r="2.1" fill="url(#gH)"/></svg><!-- tooltip -->
<div class="a" style="left:164.2px;top:269.7px;width:148.6px;height:9.9px;background:#fbfbfb;border:.7px solid #8a8a8a;border-radius:1px"></div>
<div class="t" style="left:167.3px;top:271.7px;font-size:6.3px;color:#555;letter-spacing:-0.06px">"C414" (-1+x, y, z): -0.6013(6), 0.4522(3), 0.6620(1)</div>
<!-- cluster mini window -->
<div class="a" style="left:119px;top:332.5px;width:118px;height:76px;background:#b9c9ea;border:.8px solid #3558b8"></div>
<div class="a" style="left:119px;top:332.5px;width:118px;height:4.6px;background:linear-gradient(#5f86dc,#2f55c0)"></div>
<div class="a" style="left:166px;top:334px;width:22px;height:1.2px;background:repeating-linear-gradient(90deg,#cfdcff 0 .8px,transparent .8px 1.8px)"></div>
<div class="a" style="left:232.4px;top:332.6px;width:4.4px;height:4.2px;background:#e07858"></div>
<svg class="a" style="left:233.2px;top:333.4px" width="3" height="3" viewBox="0 0 3 3"><path d="M.3.3 2.7 2.7M2.7.3.3 2.7" stroke="#fff" stroke-width=".7"/></svg>
<svg class="a" style="left:121.5px;top:338.7px" width="9.0" height="9.0" viewBox="0 0 9 9"><g fill="#f4f6fc" stroke="#8c94a8" stroke-width=".7"><circle cx="2.6" cy="2.6" r="1.5"/><circle cx="6.4" cy="2.6" r="1.5"/><circle cx="2.6" cy="6.4" r="1.5"/><circle cx="6.4" cy="6.4" r="1.5"/></g><path d="M3 3 6 6M6 3 3 6" stroke="#8c94a8" stroke-width=".7"/></svg>
<svg class="a" style="left:134.3px;top:338.2px" width="10.0" height="10.0" viewBox="0 0 10 10"><g fill="none" stroke="#eda86a" stroke-width="1"><path d="M.6 3V.6H3M7 .6h2.4V3M.6 7v2.4H3M7 9.4h2.4V7"/></g><path d="M2 2 8 8M8 2 2 8" stroke="#f2cfa8" stroke-width=".8"/><circle cx="5" cy="5" r="1.5" fill="#4a0a0a"/></svg>
<svg class="a" style="left:146.2px;top:338.7px" width="9.0" height="9.0" viewBox="0 0 9 9"><g fill="#2a3070"><polygon points="0.4,0.4 3.2,0.8 0.8,3.2"/><polygon points="8.6,0.4 5.8,0.8 8.2,3.2"/><polygon points="0.4,8.6 3.2,8.2 0.8,5.8"/><polygon points="8.6,8.6 5.8,8.2 8.2,5.8"/></g><circle cx="4.5" cy="4.5" r="2.6" fill="none" stroke="#d4dcf2" stroke-width=".7" stroke-dasharray="1 .8"/></svg>
<svg class="a" style="left:156.8px;top:338.7px" width="9.0" height="9.0" viewBox="0 0 9 9"><polygon points="4.5,.8 2.4,3.4 6.6,3.4" fill="#9aa2b6"/><polygon points="4.5,8.2 2.4,5.6 6.6,5.6" fill="#9aa2b6"/><path d="M1.4 4.5h6.2" stroke="#c4cade" stroke-width=".7"/></svg>
<svg class="a" style="left:167.9px;top:338.7px" width="9.0" height="9.0" viewBox="0 0 9 9"><g fill="#2a3070"><polygon points="0.4,0.4 3.2,0.8 0.8,3.2"/><polygon points="8.6,0.4 5.8,0.8 8.2,3.2"/><polygon points="0.4,8.6 3.2,8.2 0.8,5.8"/><polygon points="8.6,8.6 5.8,8.2 8.2,5.8"/></g><circle cx="4.5" cy="4.5" r="2.6" fill="none" stroke="#d4dcf2" stroke-width=".7" stroke-dasharray="1 .8"/></svg>
<svg class="a" style="left:179.0px;top:338.7px" width="9.0" height="9.0" viewBox="0 0 9 9"><circle cx="4.5" cy="4.5" r="3" fill="#d2dcf4"/><polygon points="4.5,2.8 6.2,4.5 4.5,6.2 2.8,4.5" fill="#1a2278"/></svg>
<svg class="a" style="left:190.0px;top:338.7px" width="9.0" height="9.0" viewBox="0 0 9 9"><g fill="#1a2278"><rect x=".9" y=".9" width="2.2" height="2.2"/><rect x="5.9" y=".9" width="2.2" height="2.2"/><rect x=".9" y="5.9" width="2.2" height="2.2"/><rect x="5.9" y="5.9" width="2.2" height="2.2"/><rect x="3.4" y="3.4" width="2.2" height="2.2"/></g></svg>
<svg class="a" style="left:201.1px;top:338.7px" width="9.0" height="9.0" viewBox="0 0 9 9"><circle cx="4.5" cy="4.5" r="2.8" fill="#cdd8f2"/><path d="M4.5 2.9v3.2M2.9 4.5h3.2" stroke="#1a2278" stroke-width="1.1"/></svg>
<svg class="a" style="left:212.0px;top:338.7px" width="9.0" height="9.0" viewBox="0 0 9 9"><ellipse cx="4.5" cy="4.5" rx="2.6" ry="1.5" fill="#f4f6fc" stroke="#2a3478" stroke-width=".7"/></svg>
<svg class="a" style="left:225.4px;top:338.7px" width="9.0" height="9.0" viewBox="0 0 9 9"><ellipse cx="4.5" cy="4.5" rx="3.4" ry="2.3" transform="rotate(-40 4.5 4.5)" fill="#3892e8" stroke="#5aa8f0" stroke-width=".5"/><path d="M2.8 5.8 6.2 3.2" stroke="#9fd0ff" stroke-width=".7"/></svg>
<svg class="a" style="left:203.6px;top:350px" width="4.4" height="2.6" viewBox="0 0 4.4 2.6"><polygon points="2.2,0 0,2.6 4.4,2.6" fill="#111"/></svg>
<!-- graph -->
<svg class="a" style="left:121px;top:352.8px" width="113.5" height="42" viewBox="0 0 113.5 42">
<defs><pattern id="gr" width="5.4" height="5.4" patternUnits="userSpaceOnUse" x="3.1" y="1.9"><path d="M0 0V5.6M0 0H5.6" stroke="#0a6a12" stroke-width=".8" fill="none"/></pattern></defs>
<rect width="113.5" height="42" fill="#000"/>
<rect x="0" y="0" width="51.4" height="34" fill="#4e4e4e"/>
<rect x="0" y="0" width="113.5" height="34.6" fill="url(#gr)"/>
<path d="M0 34.2h51" stroke="#2434c8" stroke-width="1"/>
<path d="M20.8 28.4v5.6M50.3 23.2v10.8" stroke="#d8d040" stroke-width="1"/>
<rect x="44" y="0" width="69.5" height="7.8" fill="#000"/><text x="114.5" y="6.6" text-anchor="end" font-size="6.9" fill="#d6d62e" font-family="Liberation Sans,sans-serif" letter-spacing="-.22">"C414" -- "O21": 3.632 Å</text>
<g font-size="6" fill="#74741a" font-family="Liberation Sans,sans-serif"><text x="0" y="40">+0.0</text><text x="22" y="40">+0.2</text><text x="44" y="40">+0.4</text><text x="66" y="40">+0.6</text><text x="88" y="40">+0.8</text></g>
</svg>
<!-- cluster bottom bar -->
<div class="a" style="left:119.6px;top:394.8px;width:116.8px;height:13px;background:#a9c1f2"></div>
<svg class="a cl4" style="left:121.5px;top:397px" width="9" height="9" viewBox="0 0 9 9"><g fill="none" stroke="#1a2aa0" stroke-width="1"><circle cx="2.8" cy="2.8" r="1.9"/><circle cx="6.2" cy="2.8" r="1.9"/><circle cx="2.8" cy="6.2" r="1.9"/><circle cx="6.2" cy="6.2" r="1.9"/></g></svg>
<div class="t" style="left:132.2px;top:398.4px;font-size:6.5px;color:#16203a;letter-spacing:-0.1px">Expand cluster</div>
<svg class="a cl4" style="left:213.8px;top:397px" width="9" height="9" viewBox="0 0 9 9"><g fill="none" stroke="#1a2aa0" stroke-width="1"><circle cx="2.8" cy="2.8" r="1.9"/><circle cx="6.2" cy="2.8" r="1.9"/><circle cx="2.8" cy="6.2" r="1.9"/><circle cx="6.2" cy="6.2" r="1.9"/></g></svg>
<svg class="a" style="left:226px;top:397.5px" width="7.5" height="7.5" viewBox="0 0 8 8"><g fill="#d83030"><rect x="0" y="0" width="2.6" height="2.6"/><rect x="5.4" y="0" width="2.6" height="2.6"/><rect x="0" y="5.4" width="2.6" height="2.6"/><rect x="5.4" y="5.4" width="2.6" height="2.6"/><rect x="2.8" y="2.8" width="2.4" height="2.4"/></g></svg>
<!-- legend -->
<div class="a" style="left:495.3px;top:371.7px;width:16.5px;height:50px;border:.8px solid #7d7d7d;background:#000"></div>
<svg class="a" style="left:495.3px;top:371.7px" width="17" height="50" viewBox="0 0 17 50">
<circle cx="5.8" cy="5.5" r="5.1" fill="url(#gO)"/><circle cx="5.8" cy="18.2" r="5.1" fill="url(#gC)"/><circle cx="5.8" cy="30.9" r="5.1" fill="url(#gN)"/><circle cx="5.8" cy="43.7" r="5.1" fill="url(#gH)"/>
<g font-size="6.6" fill="#ececec" font-family="Liberation Sans,sans-serif"><text x="11.2" y="7.9">O</text><text x="11.2" y="20.6">C</text><text x="11.2" y="33.3">N</text><text x="11.2" y="46.1">H</text></g>
</svg>
<!-- strip below canvas -->
<div class="a" style="left:16.3px;top:422px;width:496.2px;height:15px;background:#f1f1f1"></div>
<div class="a" style="left:26.5px;top:423px;width:464px;height:13px;background:#fff;border-left:1px solid #cfcfcf;border-right:1px solid #d6d6d6"></div>
<svg class="a" style="left:18.6px;top:424.5px" width="6" height="10" viewBox="0 0 6 10"><polygon points="3,.8 .6,3.6 5.4,3.6" fill="#9a9a9a"/><polygon points="3,9.2 .6,6.4 5.4,6.4" fill="#9a9a9a"/></svg>
<svg class="a" style="left:494px;top:426.4px" width="16" height="6" viewBox="0 0 16 6"><polygon points="1.2,3 4,.6 4,5.4" fill="#8c8c8c"/><polygon points="14.2,3 11.4,.6 11.4,5.4" fill="#8c8c8c"/></svg>
<!-- splitter & right pane -->
<div class="a" style="left:512px;top:59.3px;width:4px;height:377.8px;background:#e9e9e9"></div>
<div class="a" style="left:515.5px;top:59.3px;width:272.5px;height:377.8px;background:#fff;border-left:1px solid #d0d0d0"></div>
<div class="a" style="left:787.8px;top:43.7px;width:1.4px;height:393.4px;background:#3f83b4"></div>
<!-- Data sheet header -->
<div class="a" style="left:516.5px;top:59.3px;width:271.5px;height:14.6px;background:#f1f1f1;border-bottom:1px solid #d4d4d4"></div>
<div class="t" style="left:519.5px;top:63.8px;font-size:6.4px;color:#1e1e1e;letter-spacing:-0.1px">Data sheet</div>
<svg class="a" style="left:553px;top:69.6px" width="4" height="2" viewBox="0 0 4 2"><polygon points="0,0 3.2,0 1.6,1.6" fill="#999"/></svg>
<svg class="a" style="left:778.6px;top:63.6px" width="6" height="6" viewBox="0 0 6 6"><path d="M.6.6 5.4 5.4M5.4.6.6 5.4" stroke="#7a7a7a" stroke-width=".9"/></svg>
<!-- data sheet scrollbar -->
<div class="a" style="left:779px;top:74px;width:8.8px;height:194px;background:#efefef"></div>
<svg class="a" style="left:781.2px;top:76.4px" width="4.4" height="3" viewBox="0 0 4.4 3"><polygon points="2.2,.2 .2,2.6 4.2,2.6" fill="#555"/></svg>
<svg class="a" style="left:781.2px;top:261.8px" width="4.4" height="3" viewBox="0 0 4.4 3"><polygon points="2.2,2.8 .2,.4 4.2,.4" fill="#555"/></svg>
<div class="a" style="left:779.3px;top:83px;width:7.6px;height:58px;background:linear-gradient(90deg,#f4f4f4,#dcdcdc 60%,#cfcfcf);border:.7px solid #a8a8a8;border-radius:1.5px"></div>
<div class="a" style="left:781.6px;top:109.6px;width:3.2px;height:3.6px;background:repeating-linear-gradient(#888 0 .7px,transparent .7px 1.4px)"></div>
<!-- data sheet content -->
<div class="a" style="left:0;top:0;width:793px;height:268px;overflow:hidden;font-size:6.9px;color:#161616">
<div class="a" style="left:521.6px;top:83px;width:242.4px;height:8.0px;background:#e1e1e1"></div>
<div class="t" style="letter-spacing:-0.153px;left:630.5px;top:84px;font-weight:bold">General</div>
<div class="a" style="left:521.6px;top:94px;width:50.1px;height:8.0px;background:#e1e1e1"></div>
<div class="t" style="letter-spacing:-0.249px;left:523.2px;top:95px;font-weight:bold">Origin</div>
<div class="t" style="letter-spacing:-0.456px;left:576px;top:95px">COD: 1100914</div>
<div class="a" style="left:521.6px;top:103px;width:50.1px;height:8.0px;background:#e1e1e1"></div>
<div class="t" style="letter-spacing:-0.220px;left:523.2px;top:104px;font-weight:bold">Name</div>
<div class="t" style="letter-spacing:-0.058px;left:576px;top:104px">trans-3-Benzoyl-2-(tert-butyl)-4-(iso-butyl)-1,3-oxazolidin-5-one</div>
<div class="a" style="left:521.6px;top:120px;width:242.4px;height:8.0px;background:#e1e1e1"></div>
<div class="t" style="letter-spacing:-0.301px;left:615.5px;top:121px;font-weight:bold">Bibliographic data</div>
<div class="a" style="left:521.6px;top:132px;width:50.1px;height:8.0px;background:#e1e1e1"></div>
<div class="t" style="letter-spacing:-0.268px;left:523.2px;top:133px;font-weight:bold">Author(s)</div>
<div class="t" style="letter-spacing:-0.172px;left:576px;top:133px">Willis, Anthony C.; Beckwith, Athelstan L.J.; Tozer, Matthew J.</div>
<div class="a" style="left:521.6px;top:141px;width:50.1px;height:8.0px;background:#e1e1e1"></div>
<div class="t" style="letter-spacing:-0.218px;left:523.2px;top:142px;font-weight:bold">Publication title</div>
<div class="t" style="letter-spacing:-0.058px;left:576px;top:142px">trans-3-Benzoyl-2-(tert-butyl)-4-(iso-butyl)-1,3-oxazolidin-5-one</div>
<div class="a" style="left:521.6px;top:158px;width:242.4px;height:8.0px;background:#e1e1e1"></div>
<div class="t" style="letter-spacing:-0.359px;left:626.4px;top:159px;font-weight:bold">Phase data</div>
<div class="a" style="left:521.6px;top:170px;width:50.1px;height:8.0px;background:#e1e1e1"></div>
<div class="t" style="letter-spacing:-0.293px;left:523.2px;top:172px;font-weight:bold">Space-group</div>
<div class="t" style="letter-spacing:-0.184px;left:576px;top:172px">P 21 21 21 (19) - orthorhombic</div>
<div class="a" style="left:521.6px;top:179px;width:50.1px;height:26.0px;background:#e1e1e1"></div>
<div class="t" style="letter-spacing:-0.460px;left:523.2px;top:189px;font-weight:bold">Cell</div>
<div class="t" style="letter-spacing:-0.308px;left:576px;top:180px">a=5.959(1) Å b=14.956(1) Å c=19.737(3) Å</div>
<div class="t" style="letter-spacing:-0.247px;left:576px;top:188px">a/b=0.3984 b/c=0.7578 c/a=3.3121</div>
<div class="t" style="letter-spacing:-0.328px;left:576px;top:198px">V=1759.02(30) Å<sup style="font-size:5px;line-height:0;vertical-align:2.4px">3</sup> Z=4</div>
<div class="a" style="left:521.6px;top:215px;width:226.8px;height:8.0px;background:#e1e1e1"></div>
<div class="t" style="letter-spacing:-0.202px;left:605.5px;top:216px;font-weight:bold">Atomic parameters</div>
<div class="a" style="left:521.8px;top:226px;width:22.1px;height:10px;background:#e1e1e1"></div>
<div class="t" style="letter-spacing:-0.502px;left:525.0px;top:229px;font-weight:bold">Atom</div>
<div class="a" style="left:545px;top:226px;width:20.3px;height:10px;background:#e1e1e1"></div>
<div class="t" style="letter-spacing:-0.239px;left:545.9px;top:229px;font-weight:bold">Wyck.</div>
<div class="a" style="left:566.4px;top:226px;width:13.8px;height:10px;background:#e1e1e1"></div>
<div class="t" style="letter-spacing:-0.260px;left:567.5px;top:229px;font-weight:bold">Site</div>
<div class="a" style="left:581.4px;top:226px;width:29.2px;height:10px;background:#e1e1e1"></div>
<div class="t" style="letter-spacing:0.135px;left:591.0px;top:229px;font-weight:bold">x/a</div>
<div class="a" style="left:611.7px;top:226px;width:28.6px;height:10px;background:#e1e1e1"></div>
<div class="t" style="letter-spacing:0.144px;left:620.8px;top:229px;font-weight:bold">y/b</div>
<div class="a" style="left:641.4px;top:226px;width:28.2px;height:10px;background:#e1e1e1"></div>
<div class="t" style="letter-spacing:0.132px;left:650.7px;top:229px;font-weight:bold">z/c</div>
<div class="a" style="left:670.6px;top:226px;width:21.4px;height:10px;background:#e1e1e1"></div>
<div class="t" style="letter-spacing:-0.108px;left:672.0px;top:229px;font-weight:bold">U [Å<sup style="font-size:5px;line-height:0;vertical-align:2.2px">2</sup>]</div>
<div class="a" style="left:693px;top:226px;width:55.4px;height:10px;background:#e1e1e1"></div>
<div class="t" style="letter-spacing:-0.293px;left:714.2px;top:229px;font-weight:bold">Flag</div>
<div class="t" style="letter-spacing:-0.902px;left:525px;top:239px">O1</div>
<div class="t" style="letter-spacing:-0.636px;left:547.5px;top:239px">4a</div>
<div class="t" style="letter-spacing:-0.844px;left:570.7px;top:239px">1</div>
<div class="t" style="letter-spacing:-0.367px;left:583.9px;top:239px">0.4154(4)</div>
<div class="t" style="letter-spacing:-0.367px;left:613.9px;top:239px">0.5699(1)</div>
<div class="t" style="letter-spacing:-0.346px;left:643.1px;top:239px">0.30260</div>
<div class="t" style="letter-spacing:-0.706px;left:525px;top:247px">C2</div>
<div class="t" style="letter-spacing:-0.636px;left:547.5px;top:247px">4a</div>
<div class="t" style="letter-spacing:-0.844px;left:570.7px;top:247px">1</div>
<div class="t" style="letter-spacing:-0.367px;left:583.9px;top:247px">0.5630(5)</div>
<div class="t" style="letter-spacing:-0.367px;left:613.9px;top:247px">0.5087(2)</div>
<div class="t" style="letter-spacing:-0.367px;left:643.1px;top:247px">0.3246(1)</div>
<div class="t" style="letter-spacing:-0.706px;left:525px;top:256px">C3</div>
<div class="t" style="letter-spacing:-0.636px;left:547.5px;top:256px">4a</div>
<div class="t" style="letter-spacing:-0.844px;left:570.7px;top:256px">1</div>
<div class="t" style="letter-spacing:-0.367px;left:583.9px;top:256px">0.5350(5)</div>
<div class="t" style="letter-spacing:-0.367px;left:613.9px;top:256px">0.4920(2)</div>
<div class="t" style="letter-spacing:-0.367px;left:643.1px;top:256px">0.3997(1)</div>
<div class="t" style="letter-spacing:-0.706px;left:525px;top:265px">N4</div>
<div class="t" style="letter-spacing:-0.636px;left:547.5px;top:265px">4a</div>
<div class="t" style="letter-spacing:-0.844px;left:570.7px;top:265px">1</div>
<div class="t" style="letter-spacing:-0.367px;left:583.9px;top:265px">0.3570(3)</div>
<div class="t" style="letter-spacing:-0.367px;left:613.9px;top:265px">0.5558(1)</div>
<div class="t" style="letter-spacing:-0.346px;left:643.1px;top:265px">0.41620</div>
</div>
<style>
.hb{height:8px;background:#e1e1e1;text-align:center;font-weight:bold;line-height:8.2px;white-space:nowrap}
.lb{height:7.4px;background:#e1e1e1;font-weight:bold;line-height:7.6px;padding-left:1.6px;white-space:nowrap;overflow:hidden;letter-spacing:-0.2px}
.th{top:226.4px;height:9.3px;background:#e1e1e1;font-weight:bold;line-height:9.6px;text-align:center;white-space:nowrap}
</style>
<!-- properties pane -->
<div class="a" style="left:516.5px;top:268px;width:271.5px;height:2.6px;background:#e9e9e9"></div>
<div class="a" style="left:516.5px;top:270.5px;width:271.5px;height:11.8px;background:#f1f1f1;border-top:1px solid #d4d4d4;border-bottom:1px solid #d9d9d9"></div>
<div class="t" style="left:519.5px;top:273.6px;font-size:6.45px;color:#1e1e1e;letter-spacing:-0.1px">Properties</div>
<svg class="a" style="left:778.6px;top:273.6px" width="6" height="6" viewBox="0 0 6 6"><path d="M.6.6 5.4 5.4M5.4.6.6 5.4" stroke="#7a7a7a" stroke-width=".9"/></svg>
<div class="a" style="left:517px;top:282.6px;width:270.5px;height:11px;background:#fff;border:.8px solid #dedede"></div>
<div class="t" style="left:519.5px;top:286.4px;font-size:5.9px;color:#222;letter-spacing:-0.05px">Structure picture contents</div>
<svg class="a" style="left:779.5px;top:287.4px" width="4" height="3" viewBox="0 0 4 3"><polygon points="0,0 3.6,0 1.8,2" fill="#222"/></svg>
<!-- header row -->
<div class="a" style="left:517px;top:294.6px;width:262px;height:11.6px;background:linear-gradient(#fdfdfd,#f4f4f4);border-bottom:1px solid #e6e6e6"></div>
<div class="a" style="left:647.2px;top:294.6px;width:.8px;height:142.4px;background:#ececec"></div>
<div class="a" style="left:691.8px;top:294.6px;width:.8px;height:142.4px;background:#ececec"></div>
<div class="a" style="left:736.4px;top:294.6px;width:.8px;height:142.4px;background:#ececec"></div>
<div class="a" style="left:517px;top:316.65px;width:262px;height:.8px;background:#f0f0f0"></div><div class="a" style="left:517px;top:327.10px;width:262px;height:.8px;background:#f0f0f0"></div><div class="a" style="left:517px;top:337.55px;width:262px;height:.8px;background:#f0f0f0"></div><div class="a" style="left:517px;top:348.00px;width:262px;height:.8px;background:#f0f0f0"></div><div class="a" style="left:517px;top:358.45px;width:262px;height:.8px;background:#f0f0f0"></div><div class="a" style="left:517px;top:368.90px;width:262px;height:.8px;background:#f0f0f0"></div><div class="a" style="left:517px;top:379.35px;width:262px;height:.8px;background:#f0f0f0"></div><div class="a" style="left:517px;top:389.80px;width:262px;height:.8px;background:#f0f0f0"></div><div class="a" style="left:517px;top:400.25px;width:262px;height:.8px;background:#f0f0f0"></div><div class="a" style="left:517px;top:410.70px;width:262px;height:.8px;background:#f0f0f0"></div><div class="a" style="left:517px;top:421.15px;width:262px;height:.8px;background:#f0f0f0"></div><div class="a" style="left:517px;top:431.60px;width:262px;height:.8px;background:#f0f0f0"></div>
<!-- props scrollbar -->
<div class="a" style="left:779px;top:294.6px;width:8.8px;height:142.4px;background:#efefef"></div>
<svg class="a" style="left:781.2px;top:298.6px" width="4.4" height="3" viewBox="0 0 4.4 3"><polygon points="2.2,.2 .2,2.6 4.2,2.6" fill="#555"/></svg>
<svg class="a" style="left:781.2px;top:429.8px" width="4.4" height="3" viewBox="0 0 4.4 3"><polygon points="2.2,2.8 .2,.4 4.2,.4" fill="#555"/></svg>
<div class="a" style="left:779.3px;top:306px;width:7.6px;height:74px;background:linear-gradient(90deg,#f4f4f4,#dcdcdc 60%,#cfcfcf);border:.7px solid #a8a8a8;border-radius:1.5px"></div>
<div class="a" style="left:781.6px;top:341.4px;width:3.2px;height:3.6px;background:repeating-linear-gradient(#888 0 .7px,transparent .7px 1.4px)"></div>
<div class="a" style="left:0;top:0;width:793px;height:436.5px;overflow:hidden;font-size:6.7px;color:#161616">
<div class="t" style="letter-spacing:-0.102px;left:518.9px;top:310px">Atomic parameters (asym. sites)</div>
<div class="t" style="right:103.9px;top:310px;letter-spacing:-0.15px">47</div>
<div class="t" style="right:59.7px;top:310px;letter-spacing:-0.15px">(47)</div>
<div class="t" style="letter-spacing:-0.104px;left:518.9px;top:320px">Symmetry records</div>
<div class="t" style="right:103.9px;top:320px;letter-spacing:-0.15px">4</div>
<div class="t" style="letter-spacing:0.035px;left:518.9px;top:331px">Atoms in unit cell</div>
<div class="t" style="right:103.9px;top:331px;letter-spacing:-0.15px">188</div>
<div class="t" style="letter-spacing:-0.036px;left:518.9px;top:341px">Bond parameters (non-bonding contacts, ...</div>
<div class="t" style="right:103.9px;top:341px;letter-spacing:-0.15px">0</div>
<div class="t" style="right:59.7px;top:341px;letter-spacing:-0.15px">(0, 0)</div>
<div class="t" style="letter-spacing:0.012px;left:518.9px;top:352px">Molecular units (mol./polym. sites)</div>
<div class="t" style="right:103.9px;top:352px;letter-spacing:-0.15px">1</div>
<div class="t" style="right:59.7px;top:352px;letter-spacing:-0.15px">(47, 0)</div>
<div class="t" style="letter-spacing:-0.113px;left:518.9px;top:362px">Created atoms</div>
<div class="t" style="right:103.9px;top:362px;letter-spacing:-0.15px">376</div>
<div class="t" style="letter-spacing:-0.023px;left:518.9px;top:372px">Created bonds (H-bonds/contacts)</div>
<div class="t" style="right:103.9px;top:372px;letter-spacing:-0.15px">384</div>
<div class="t" style="right:59.7px;top:372px;letter-spacing:-0.15px">(0, 8)</div>
<div class="t" style="letter-spacing:-0.072px;left:518.9px;top:383px">Created molecules (complete)</div>
<div class="t" style="right:103.9px;top:383px;letter-spacing:-0.15px">8</div>
<div class="t" style="right:59.7px;top:383px;letter-spacing:-0.15px">(8)</div>
<div class="t" style="letter-spacing:-0.141px;left:518.9px;top:393px">Cell corners</div>
<div class="t" style="right:103.9px;top:393px;letter-spacing:-0.15px">0</div>
<div class="t" style="letter-spacing:-0.231px;left:518.9px;top:404px">Cell edges</div>
<div class="t" style="right:103.9px;top:404px;letter-spacing:-0.15px">0</div>
<div class="t" style="letter-spacing:-0.050px;left:518.9px;top:414px">Atom labels</div>
<div class="t" style="right:103.9px;top:414px;letter-spacing:-0.15px">0</div>
<div class="t" style="letter-spacing:-0.141px;left:518.9px;top:425px">Bond labels</div>
<div class="t" style="right:103.9px;top:425px;letter-spacing:-0.15px">0</div>
<div class="t" style="letter-spacing:-0.122px;left:518.9px;top:435px">Texts</div>
<div class="t" style="right:103.9px;top:435px;letter-spacing:-0.15px">0</div>
</div>
<style>.r1{right:104.6px}.r2{right:60px}</style>
<!-- bottom dock / toolbar -->
<div class="a" style="left:4px;top:436.7px;width:785px;height:15px;background:#9eacc9"></div>
<div class="a" style="left:4px;top:436.7px;width:384px;height:15px;background:linear-gradient(#bcc7dd,#adb9d2 50%,#a5b2cd)"></div>
<div class="a" style="left:7.6px;top:440px;width:1px;height:9px;background:repeating-linear-gradient(#55627c 0 1px,transparent 1px 2px)"></div>
<svg class="a" style="left:22.2px;top:439.3px" width="10.0" height="10.0" viewBox="0 0 10 10"><rect x=".8" y="1" width="7.6" height="6.4" fill="#f0f3fa" stroke="#4a5a80" stroke-width=".7"/><rect x=".8" y="1" width="7.6" height="1.5" fill="#3a5aa8"/><path d="M4.4 7h5M7.6 5.2 9.6 7 7.6 8.8" stroke="#18b8c8" stroke-width="1.3" fill="none"/></svg>
<svg class="a" style="left:34.8px;top:439.3px" width="10.0" height="10.0" viewBox="0 0 10 10"><path d="M3 8.6 8.6 2" stroke="#222" stroke-width="1.3"/><circle cx="2.6" cy="3" r="1.5" fill="#f4e020"/><circle cx="5" cy="1.6" r="1.1" fill="#f4e020"/><circle cx="2" cy="6" r="1.1" fill="#f4e020"/><circle cx="7.6" cy="6.6" r="1" fill="#f4e020"/></svg>
<svg class="a" style="left:46.7px;top:439.3px" width="10.0" height="10.0" viewBox="0 0 10 10"><rect x=".8" y="1" width="8.2" height="7" fill="#f6f6f0" stroke="#1a2a6a" stroke-width=".9"/><circle cx="5.6" cy="4" r="1.8" fill="#f4d020" stroke="#333" stroke-width=".5"/><path d="M1.2 9 4.4 5.4" stroke="#222" stroke-width="1.1"/></svg>
<svg class="a" style="left:58.6px;top:444.1px" width="3.4" height="2.4" viewBox="0 0 4 3"><polygon points="0,0 4,0 2,2.6" fill="#1a2030"/></svg>
<div class="a" style="left:64.8px;top:439.3px;width:1px;height:10px;background:#8390ad"></div>
<svg class="a" style="left:68.4px;top:439.3px" width="10.0" height="10.0" viewBox="0 0 10 10"><polygon points="1,5 5,1.4 9,4.6 5.4,8.6" fill="#f0e070" stroke="#111" stroke-width="1"/><circle cx="2" cy="4.4" r="1.3" fill="#111"/></svg>
<svg class="a" style="left:80.5px;top:439.3px" width="10.0" height="10.0" viewBox="0 0 10 10"><g fill="#f4e020" stroke="#6a6000" stroke-width=".4"><circle cx="3" cy="3" r="2"/><circle cx="7" cy="3" r="2"/><circle cx="3" cy="7" r="2"/><circle cx="7" cy="7" r="2"/></g><path d="M5 .6v3M3.5 2h3" stroke="#111" stroke-width=".8"/></svg>
<svg class="a" style="left:93.0px;top:439.3px" width="10.0" height="10.0" viewBox="0 0 10 10"><path d="M.4 5h4M2.4 3v4" stroke="#111" stroke-width="1.1"/><circle cx="7" cy="5" r="2.4" fill="#f4e020" stroke="#333" stroke-width=".5"/></svg>
<svg class="a" style="left:105.0px;top:439.3px" width="10.0" height="10.0" viewBox="0 0 10 10"><g fill="none" stroke="#111" stroke-width=".8"><circle cx="4" cy="2.4" r="1.5"/><circle cx="2.2" cy="7.4" r="1.5"/><circle cx="7.8" cy="7.4" r="1.5"/><path d="M4.6 3.8 6 5.4 3.6 6.8M6.4 6.4 7.4 6"/></g></svg>
<svg class="a" style="left:117.3px;top:439.3px" width="10.0" height="10.0" viewBox="0 0 10 10"><g fill="#7f9ae8" stroke="#2038b0" stroke-width=".7"><circle cx="3" cy="3" r="1.9"/><circle cx="7" cy="3" r="1.9"/><circle cx="3" cy="7" r="1.9"/><circle cx="7" cy="7" r="1.9"/></g><circle cx="5" cy="5" r="1.4" fill="#dfe6ff" stroke="#2038b0" stroke-width=".6"/></svg>
<svg class="a" style="left:129.7px;top:439.3px" width="10.0" height="10.0" viewBox="0 0 10 10"><g fill="none" stroke="#8c94a8" stroke-width=".7"><circle cx="5" cy="2.6" r="1.6"/><circle cx="2.6" cy="7.2" r="1.6"/><circle cx="7.4" cy="7.2" r="1.6"/><path d="M4.2 4 3.2 5.8M5.8 4l1 1.8"/></g></svg>
<svg class="a" style="left:141.8px;top:439.3px" width="10.0" height="10.0" viewBox="0 0 10 10"><circle cx="5" cy="5" r="3.8" fill="#d8d8d8" stroke="#666" stroke-width=".6"/><circle cx="5" cy="5" r="2.2" fill="#e8d820" stroke="#333" stroke-width=".5"/><circle cx="5" cy="5" r=".8" fill="#333"/></svg>
<svg class="a" style="left:152.9px;top:444.1px" width="3.4" height="2.4" viewBox="0 0 4 3"><polygon points="0,0 4,0 2,2.6" fill="#1a2030"/></svg>
<div class="a" style="left:159.1px;top:439.3px;width:1px;height:10px;background:#8390ad"></div>
<svg class="a" style="left:162.5px;top:439.3px" width="10.0" height="10.0" viewBox="0 0 10 10"><polygon points="2.6,1 7.4,1 9.6,5 7.4,9 2.6,9 .4,5" fill="none" stroke="#2038d0" stroke-width="1.3"/></svg>
<svg class="a" style="left:174.6px;top:439.3px" width="10.0" height="10.0" viewBox="0 0 10 10"><circle cx="5" cy="5" r="3.8" fill="none" stroke="#f0e040" stroke-width="1.6"/><path d="M5 1.2A3.8 3.8 0 0 0 1.6 6.8" fill="none" stroke="#2038d0" stroke-width="1.6"/></svg>
<div class="a" style="left:222.7px;top:439.3px;width:1px;height:10px;background:#8390ad"></div>
<div class="a" style="left:275.2px;top:439.3px;width:1px;height:10px;background:#8390ad"></div>
<svg class="a" style="left:278.2px;top:439.3px" width="10.0" height="10.0" viewBox="0 0 10 10"><rect x="1" y="2.6" width="6.4" height="6.4" fill="#cfe0ff" stroke="#2038b0" stroke-width=".9"/><path d="M1 2.6 2.8.8h6.4v6.4L7.4 9M7.4 2.6 9.2.8" fill="none" stroke="#2038b0" stroke-width=".9"/><path d="M4.2 2.6v6.4" stroke="#2038b0" stroke-width=".7"/></svg>
<svg class="a" style="left:290.3px;top:439.3px" width="10.0" height="10.0" viewBox="0 0 10 10"><circle cx="5" cy="5" r="2.8" fill="#e8e8e8" stroke="#666" stroke-width=".7"/><path d="M5 .4v9.2M.4 5h9.2" stroke="#666" stroke-width=".7"/></svg>
<svg class="a" style="left:302.2px;top:439.3px" width="10.0" height="10.0" viewBox="0 0 10 10"><g fill="#e82020"><circle cx="2.4" cy="3" r="1.7"/><circle cx="7.6" cy="3" r="1.7"/><circle cx="5" cy="5.4" r="1.9"/><circle cx="2.4" cy="7.6" r="1.5"/><circle cx="7.6" cy="7.6" r="1.5"/></g><path d="M1.6 2 8.4 8.4M8.4 2 1.6 8.4" stroke="#901010" stroke-width=".7"/></svg>
<svg class="a" style="left:313.8px;top:444.1px" width="3.4" height="2.4" viewBox="0 0 4 3"><polygon points="0,0 4,0 2,2.6" fill="#1a2030"/></svg>
<svg class="a" style="left:320.6px;top:439.3px" width="10.0" height="10.0" viewBox="0 0 10 10"><circle cx="2.6" cy="7" r="1.9" fill="#e8e8e8" stroke="#666" stroke-width=".6"/><path d="M3.6 5.6 5 3.6" stroke="#666" stroke-width=".6"/><text x="4.6" y="4.6" font-size="4.6" font-family="Liberation Sans,sans-serif" fill="#333">Fe</text></svg>
<div class="a" style="left:331.9px;top:439.3px;width:1px;height:10px;background:#8390ad"></div>
<svg class="a" style="left:335.0px;top:439.3px" width="10.0" height="10.0" viewBox="0 0 10 10"><rect x=".6" y=".6" width="8.8" height="8.8" fill="#1c30c8"/><circle cx="2.6" cy="2.6" r="1.5" fill="#f4e020"/><circle cx="7.4" cy="2.6" r="1.5" fill="#f4e020"/><circle cx="2.6" cy="7.4" r="1.5" fill="#f4e020"/><circle cx="7.4" cy="7.4" r="1.5" fill="#f4e020"/><path d="M3 3 7 7M7 3 3 7" stroke="#111" stroke-width="1.6"/></svg>
<svg class="a" style="left:347.6px;top:444.1px" width="3.4" height="2.4" viewBox="0 0 4 3"><polygon points="0,0 4,0 2,2.6" fill="#1a2030"/></svg>
<div class="a" style="left:353.9px;top:439.3px;width:1px;height:10px;background:#8390ad"></div>
<svg class="a" style="left:356.4px;top:439.3px" width="10.0" height="10.0" viewBox="0 0 10 10"><text x="0" y="8.6" font-size="10" font-weight="bold" font-style="italic" font-family="Liberation Serif,serif" fill="#1828b0">M</text></svg>
<svg class="a" style="left:369.0px;top:439.3px" width="10.0" height="10.0" viewBox="0 0 10 10"><rect x=".8" y="1" width="8.4" height="8" fill="#f4e8e8" stroke="#4a5a80" stroke-width=".8"/><rect x="2.4" y="2.8" width="5" height="4.6" fill="#20b8c8"/><circle cx="3" cy="3" r="1.1" fill="#e83030"/></svg>
<div class="t" style="letter-spacing:-0.598px;left:187.7px;top:441px;font-size:6.4px;color:#1c2030"><span>Pg.</span></div>
<div class="t" style="letter-spacing:-0.580px;left:199.3px;top:441px;font-size:6.4px;color:#1c2030"><span>Ovr.</span></div>
<div class="t" style="letter-spacing:-0.571px;left:211.4px;top:441px;font-size:6.4px;color:#1c2030"><span>Out</span></div>
<div class="t" style="letter-spacing:-0.058px;left:227.2px;top:441px;font-size:6.6px;color:#1c2030"><span>X</span><span style="font-size:5.3999999999999995px;position:relative;top:1.3px">A</span></div>
<div class="t" style="letter-spacing:-0.103px;left:239.0px;top:441px;font-size:6.6px;color:#1c2030"><span>X</span><span style="font-size:5.3999999999999995px;position:relative;top:1.3px">M</span></div>
<div class="t" style="letter-spacing:-0.500px;left:250.8px;top:441px;font-size:6.6px;color:#1c2030"><span>M</span><span style="font-size:5.3999999999999995px;position:relative;top:1.3px">M</span></div>
<div class="t" style="letter-spacing:-0.655px;left:263.2px;top:441px;font-size:6.6px;color:#1c2030"><span>Rd.</span></div>
<svg class="a" style="left:382.3px;top:446px" width="4" height="5" viewBox="0 0 4 5"><rect x=".4" y="0" width="3.2" height=".9" fill="#1a2030"/><polygon points="0.2,2 3.8,2 2,4.4" fill="#1a2030"/></svg>
<!-- status bar -->
<div class="a" style="left:4px;top:451.6px;width:785px;height:11.4px;background:linear-gradient(#2d3c62,#283659)"></div>
<div id="sb" class="a" style="left:0;top:0;font-size:6.8px;color:#f4f6fa;letter-spacing:-0.1px">
<div class="t" style="letter-spacing:-0.111px;left:7px;top:454.6px">Turn mouse wheel to add neighbouring molecules each, using current contacts settings.</div>
<div class="t" style="left:483px;top:454.6px">APC</div><div class="t" style="left:498px;top:454.6px">Auto Picture</div><div class="t" style="left:555px;top:454.6px">ON</div>
<div class="t" style="left:594px;top:454.6px">47 parms</div><div class="t" style="left:633px;top:454.6px">376 atoms</div><div class="t" style="left:672px;top:454.6px">384 bonds</div><div class="t" style="left:711px;top:454.6px">8 mol.</div><div class="t" style="left:746px;top:454.6px">0 polyh.</div>
</div>
<div class="a" style="left:448.0px;top:453.2px;width:.9px;height:8.8px;background:#b4bdd2"></div><div class="a" style="left:462.6px;top:453.2px;width:.9px;height:8.8px;background:#b4bdd2"></div><div class="a" style="left:478.3px;top:453.2px;width:.9px;height:8.8px;background:#b4bdd2"></div><div class="a" style="left:494.2px;top:453.2px;width:.9px;height:8.8px;background:#b4bdd2"></div><div class="a" style="left:551.4px;top:453.2px;width:.9px;height:8.8px;background:#b4bdd2"></div><div class="a" style="left:566.1px;top:453.2px;width:.9px;height:8.8px;background:#b4bdd2"></div><div class="a" style="left:590.6px;top:453.2px;width:.9px;height:8.8px;background:#b4bdd2"></div><div class="a" style="left:629.6px;top:453.2px;width:.9px;height:8.8px;background:#b4bdd2"></div><div class="a" style="left:668.1px;top:453.2px;width:.9px;height:8.8px;background:#b4bdd2"></div><div class="a" style="left:707.6px;top:453.2px;width:.9px;height:8.8px;background:#b4bdd2"></div><div class="a" style="left:742.3px;top:453.2px;width:.9px;height:8.8px;background:#b4bdd2"></div>
<svg class="a" style="left:783px;top:457px" width="5" height="5" viewBox="0 0 5 5"><g fill="#aab6d0"><rect x="3.6" y="0" width="1" height="1"/><rect x="1.8" y="1.8" width="1" height="1"/><rect x="3.6" y="1.8" width="1" height="1"/><rect x="0" y="3.6" width="1" height="1"/><rect x="1.8" y="3.6" width="1" height="1"/><rect x="3.6" y="3.6" width="1" height="1"/></g></svg>
<!-- window borders -->
<div class="a" style="left:0;top:15.5px;width:4.2px;height:451.5px;background:linear-gradient(90deg,#6d8da6 0,#86adc9 25%,#9cc3de 60%,#a9cde6 100%)"></div>
<div class="a" style="left:788.6px;top:15.5px;width:4.4px;height:451.5px;background:linear-gradient(90deg,#3f7fae 0,#4a8ab8 40%,#86b8d8 70%,#6c8aa3 100%)"></div>
<div class="a" style="left:0;top:463px;width:793px;height:4px;background:linear-gradient(#8fc0e0,#a8d0ea 50%,#b5d6ec 75%,#6c8aa3)"></div>
</div></body></html>
